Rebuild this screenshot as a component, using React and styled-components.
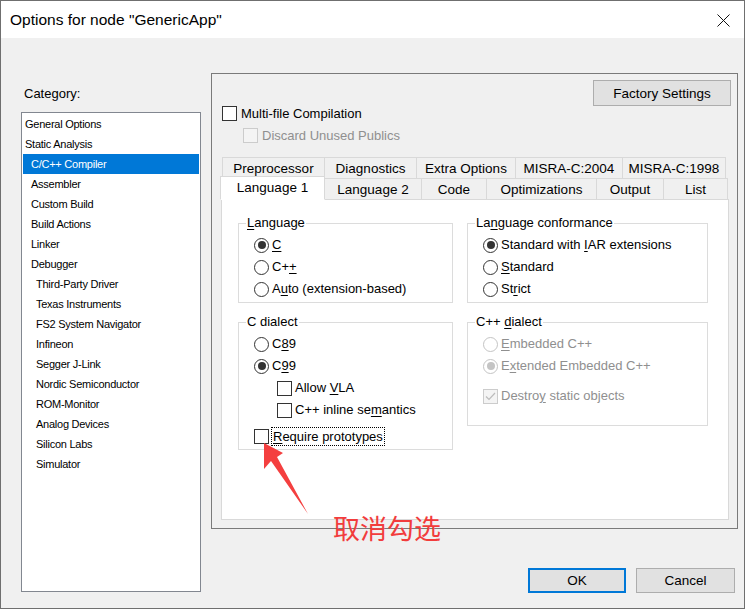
import React from "react";
import styled, { createGlobalStyle } from "styled-components";

const categories = [
  { name: "General Options", level: 0 },
  { name: "Static Analysis", level: 0 },
  { name: "C/C++ Compiler", level: 1, selected: true },
  { name: "Assembler", level: 1 },
  { name: "Custom Build", level: 1 },
  { name: "Build Actions", level: 1 },
  { name: "Linker", level: 1 },
  { name: "Debugger", level: 1 },
  { name: "Third-Party Driver", level: 2 },
  { name: "Texas Instruments", level: 2 },
  { name: "FS2 System Navigator", level: 2 },
  { name: "Infineon", level: 2 },
  { name: "Segger J-Link", level: 2 },
  { name: "Nordic Semiconductor", level: 2 },
  { name: "ROM-Monitor", level: 2 },
  { name: "Analog Devices", level: 2 },
  { name: "Silicon Labs", level: 2 },
  { name: "Simulator", level: 2 },
];

const backTabs = [
  { label: "Preprocessor", width: 103 },
  { label: "Diagnostics", width: 93 },
  { label: "Extra Options", width: 100 },
  { label: "MISRA-C:2004", width: 108 },
  { label: "MISRA-C:1998", width: 104 },
];

const frontTabs = [
  { label: "Language 1", width: 105, active: true },
  { label: "Language 2", width: 98 },
  { label: "Code", width: 66 },
  { label: "Optimizations", width: 111 },
  { label: "Output", width: 68 },
  { label: "List", width: 65 },
];

const App = () => {
  return (
    <Window>
      <GlobalStyle />
      <TitleBar>
        <Title>Options for node "GenericApp"</Title>
        <CloseButton>
          <svg width="13" height="13" viewBox="0 0 13 13">
            <path d="M0.5 0.5 L12.5 12.5 M12.5 0.5 L0.5 12.5" stroke="#111" strokeWidth="1" fill="none" />
          </svg>
        </CloseButton>
      </TitleBar>

      <Body>
        <LeftColumn>
          <CategoryLabel>Category:</CategoryLabel>
          <CategoryList>
            {categories.map((c) => (
              <CategoryItem key={c.name} $level={c.level} $selected={c.selected}>
                {c.name}
              </CategoryItem>
            ))}
          </CategoryList>
        </LeftColumn>

        <RightColumn>
          <OptionsFrame>
            <TopRow>
              <PushButton $width={138} $height={26}>
                Factory Settings
              </PushButton>
            </TopRow>
            <CheckRow $indent={1}>
              <CheckBox />
              <OptionText>Multi-file Compilation</OptionText>
            </CheckRow>
            <CheckRow $indent={22} $top={7}>
              <CheckBox $disabled />
              <OptionText $disabled>Discard Unused Publics</OptionText>
            </CheckRow>

            <TabArea>
              <TabRow>
                {backTabs.map((t) => (
                  <Tab key={t.label} $width={t.width}>
                    {t.label}
                  </Tab>
                ))}
              </TabRow>
              <TabRow $front>
                {frontTabs.map((t) => (
                  <Tab key={t.label} $width={t.width} $active={t.active}>
                    {t.label}
                  </Tab>
                ))}
              </TabRow>
              <TabPanel>
                <GroupGrid>
                  <Group>
                    <Legend>
                      <Mn>L</Mn>anguage
                    </Legend>
                    <GroupBody>
                      <OptionRow>
                        <Radio $checked />
                        <OptionText>
                          <Mn>C</Mn>
                        </OptionText>
                      </OptionRow>
                      <OptionRow>
                        <Radio />
                        <OptionText>
                          C+<Mn>+</Mn>
                        </OptionText>
                      </OptionRow>
                      <OptionRow>
                        <Radio />
                        <OptionText>
                          A<Mn>u</Mn>to (extension-based)
                        </OptionText>
                      </OptionRow>
                    </GroupBody>
                  </Group>

                  <Group>
                    <Legend>
                      La<Mn>n</Mn>guage conformance
                    </Legend>
                    <GroupBody>
                      <OptionRow>
                        <Radio $checked />
                        <OptionText>
                          Standard with <Mn>I</Mn>AR extensions
                        </OptionText>
                      </OptionRow>
                      <OptionRow>
                        <Radio />
                        <OptionText>
                          <Mn>S</Mn>tandard
                        </OptionText>
                      </OptionRow>
                      <OptionRow>
                        <Radio />
                        <OptionText>
                          St<Mn>r</Mn>ict
                        </OptionText>
                      </OptionRow>
                    </GroupBody>
                  </Group>

                  <Group>
                    <Legend>C dialect</Legend>
                    <GroupBody>
                      <OptionRow>
                        <Radio />
                        <OptionText>
                          C<Mn>8</Mn>9
                        </OptionText>
                      </OptionRow>
                      <OptionRow>
                        <Radio $checked />
                        <OptionText>
                          C<Mn>9</Mn>9
                        </OptionText>
                      </OptionRow>
                      <OptionRow $indent={23}>
                        <CheckBox />
                        <OptionText>
                          Allow <Mn>V</Mn>LA
                        </OptionText>
                      </OptionRow>
                      <OptionRow $indent={23}>
                        <CheckBox />
                        <OptionText>
                          C++ inline se<Mn>m</Mn>antics
                        </OptionText>
                      </OptionRow>
                      <OptionRow $top={4}>
                        <CheckBox />
                        <FocusLabel>
                          <Mn>R</Mn>equire prototypes
                        </FocusLabel>
                      </OptionRow>
                    </GroupBody>
                  </Group>

                  <Group>
                    <Legend>
                      C++ <Mn>d</Mn>ialect
                    </Legend>
                    <GroupBody $bottom={18}>
                      <OptionRow>
                        <Radio $disabled />
                        <OptionText $disabled>
                          <Mn>E</Mn>mbedded C++
                        </OptionText>
                      </OptionRow>
                      <OptionRow>
                        <Radio $disabled $checked />
                        <OptionText $disabled>
                          E<Mn>x</Mn>tended Embedded C++
                        </OptionText>
                      </OptionRow>
                      <OptionRow $top={8}>
                        <CheckBox $disabled>
                          <svg width="13" height="13" viewBox="0 0 13 13">
                            <path d="M2 6.5 L5 9.5 L11 3" stroke="#bcbcbc" strokeWidth="1.2" fill="none" />
                          </svg>
                        </CheckBox>
                        <OptionText $disabled>
                          Destro<Mn>y</Mn> static objects
                        </OptionText>
                      </OptionRow>
                    </GroupBody>
                  </Group>
                </GroupGrid>
              </TabPanel>
            </TabArea>
          </OptionsFrame>

          <ButtonRow>
            <PushButton $width={98} $height={25} $default>
              OK
            </PushButton>
            <PushButton $width={99} $height={25}>
              Cancel
            </PushButton>
          </ButtonRow>
        </RightColumn>
      </Body>

      <Arrow width="60" height="80" viewBox="0 0 60 80">
        <polygon points="8,4 27,14 21,18 52,75 15,22 8,30" fill="#f43f3f" />
      </Arrow>
      <Note>取消勾选</Note>
    </Window>
  );
};

export default App;

const GlobalStyle = createGlobalStyle`
  html, body {
    margin: 0;
    padding: 0;
    background: #ffffff;
  }
  body {
    font-family: "Liberation Sans", Arial, sans-serif;
    color: #000;
  }
`;

const Window = styled.div`
  position: relative;
  width: 745px;
  height: 609px;
  box-sizing: border-box;
  border: 1px solid #6f6f6f;
  background: #f0f0f0;
  display: flex;
  flex-direction: column;
  overflow: hidden;
`;

const TitleBar = styled.div`
  height: 37px;
  flex-shrink: 0;
  background: #ffffff;
  display: flex;
  align-items: center;
  justify-content: space-between;
  padding-left: 9px;
`;

const Title = styled.span`
  font-size: 15.5px;
  color: #000;
`;

const CloseButton = styled.div`
  display: flex;
  align-items: center;
  padding-right: 14px;
  padding-top: 1px;
`;

const Body = styled.div`
  flex: 1;
  display: flex;
  padding: 35px 0 0 20px;
`;

const LeftColumn = styled.div`
  width: 180px;
  display: flex;
  flex-direction: column;
`;

const CategoryLabel = styled.div`
  margin-top: 13px;
  height: 16px;
  line-height: 16px;
  font-size: 13px;
  padding-left: 3px;
`;

const CategoryList = styled.div`
  margin-top: 10px;
  height: 480px;
  box-sizing: border-box;
  border: 1px solid #828790;
  background: #ffffff;
  padding: 1px;
`;

const CategoryItem = styled.div`
  height: 20px;
  line-height: 20px;
  font-size: 11px;
  letter-spacing: -0.25px;
  padding-left: ${(p) => [2, 8, 13][p.$level]}px;
  background: ${(p) => (p.$selected ? "#0078d7" : "transparent")};
  color: ${(p) => (p.$selected ? "#ffffff" : "#000000")};
  white-space: nowrap;
`;

const RightColumn = styled.div`
  margin-left: 10px;
  width: 527px;
  display: flex;
  flex-direction: column;
`;

const OptionsFrame = styled.div`
  height: 456px;
  box-sizing: border-box;
  border: 1px solid #7a7a7a;
  padding: 6px 6px 0 9px;
  display: flex;
  flex-direction: column;
`;

const TopRow = styled.div`
  display: flex;
  justify-content: flex-end;
`;

const PushButton = styled.div`
  width: ${(p) => p.$width}px;
  height: ${(p) => p.$height}px;
  box-sizing: border-box;
  border: ${(p) => (p.$default ? "2px solid #0078d7" : "1px solid #adadad")};
  background: #e1e1e1;
  display: flex;
  align-items: center;
  justify-content: center;
  font-size: 13.5px;
`;

const CheckRow = styled.div`
  display: flex;
  align-items: center;
  height: 15px;
  margin-left: ${(p) => p.$indent || 0}px;
  margin-top: ${(p) => p.$top || 0}px;
  gap: 4px;
`;

const CheckBox = styled.div`
  width: 15px;
  height: 15px;
  box-sizing: border-box;
  flex-shrink: 0;
  border: 1px solid ${(p) => (p.$disabled ? "#cccccc" : "#333333")};
  background: ${(p) => (p.$disabled ? "#f4f4f4" : "#ffffff")};
  display: flex;
  align-items: center;
  justify-content: center;
`;

const OptionText = styled.span`
  font-size: 13px;
  line-height: 16px;
  white-space: nowrap;
  color: ${(p) => (p.$disabled ? "#8f8f8f" : "#000000")};
`;

const Mn = styled.span`
  text-decoration: underline;
  text-underline-offset: 2px;
`;

const TabArea = styled.div`
  margin-top: 14px;
  width: 508px;
  display: flex;
  flex-direction: column;
`;

const TabRow = styled.div`
  display: flex;
  align-items: flex-end;
  height: 22px;
  padding-left: 1px;
  margin-top: ${(p) => (p.$front ? -1 : 0)}px;
`;

const Tab = styled.div`
  position: relative;
  z-index: ${(p) => (p.$active ? 2 : 0)};
  width: ${(p) => p.$width}px;
  height: ${(p) => (p.$active ? 24 : 22)}px;
  margin-left: ${(p) => (p.$active ? -2 : 0)}px;
  margin-right: -1px;
  box-sizing: border-box;
  border: 1px solid #d9d9d9;
  border-bottom-color: ${(p) => (p.$active ? "#ffffff" : "#d9d9d9")};
  background: ${(p) => (p.$active ? "#ffffff" : "#f0f0f0")};
  display: flex;
  align-items: center;
  justify-content: center;
  font-size: 13.5px;
  padding-bottom: ${(p) => (p.$active ? 1 : 0)}px;
  white-space: nowrap;
`;

const TabPanel = styled.div`
  margin-top: -1px;
  height: 321px;
  box-sizing: border-box;
  border: 1px solid #d9d9d9;
  background: #ffffff;
  padding: 15px 0 0 16px;
`;

const GroupGrid = styled.div`
  display: grid;
  grid-template-columns: 215px 241px;
  column-gap: 14px;
  row-gap: 11px;
  align-items: start;
`;

const Group = styled.fieldset`
  margin: 0;
  padding: 0;
  min-width: 0;
  border: 1px solid #dcdcdc;
`;

const Legend = styled.legend`
  margin-left: 7px;
  padding: 0 1px;
  font-size: 13px;
  line-height: 16px;
  height: 16px;
`;

const GroupBody = styled.div`
  padding: 3px 0 ${(p) => p.$bottom || 2}px 15px;
  display: flex;
  flex-direction: column;
`;

const OptionRow = styled.div`
  height: 22px;
  display: flex;
  align-items: center;
  gap: 3px;
  margin-left: ${(p) => p.$indent || 0}px;
  margin-top: ${(p) => p.$top || 0}px;
`;

const Radio = styled.div`
  width: 15px;
  height: 15px;
  flex-shrink: 0;
  box-sizing: border-box;
  border-radius: 50%;
  border: 1px solid ${(p) => (p.$disabled ? "#c4c4c4" : "#333333")};
  background: #ffffff;
  display: flex;
  align-items: center;
  justify-content: center;

  &::after {
    content: "";
    display: ${(p) => (p.$checked ? "block" : "none")};
    width: 8px;
    height: 8px;
    border-radius: 50%;
    background: ${(p) => (p.$disabled ? "#c4c4c4" : "#333333")};
  }
`;

const FocusLabel = styled.span`
  margin-left: -1px;
  border: 1px dotted #000;
  padding: 0 1px;
  font-size: 13px;
  line-height: 17px;
  white-space: nowrap;
`;

const ButtonRow = styled.div`
  margin-top: 39px;
  display: flex;
  justify-content: flex-end;
  align-items: flex-start;
  gap: 10px;
  padding-right: 3px;
`;

const Arrow = styled.svg`
  position: absolute;
  left: 255px;
  top: 438px;
`;

const Note = styled.div`
  position: absolute;
  left: 332px;
  top: 511px;
  height: 32px;
  line-height: 32px;
  font-family: "Noto Sans CJK SC", "Noto Sans", sans-serif;
  font-size: 27px;
  color: #f23c3c;
`;
